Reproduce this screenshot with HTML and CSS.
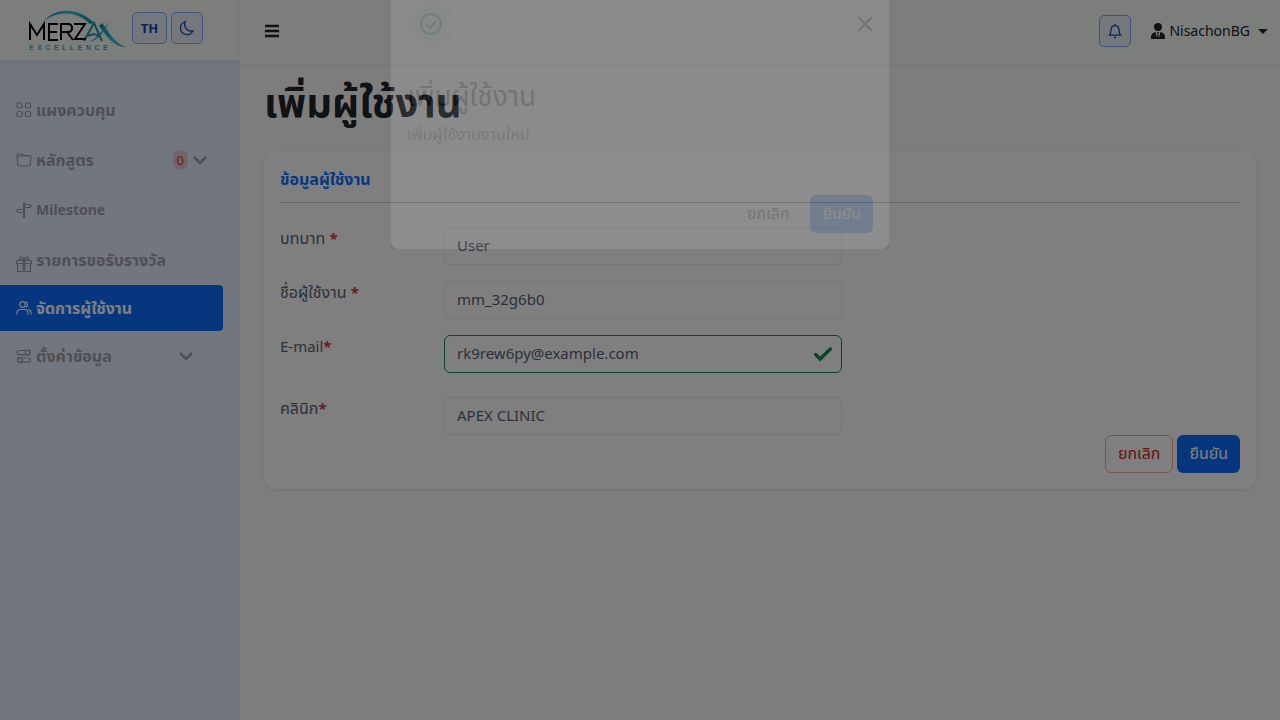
FILE: index.html
```html
<!DOCTYPE html>
<html lang="th">
<head>
<meta charset="utf-8">
<meta name="viewport" content="width=device-width, initial-scale=1">
<title>เพิ่มผู้ใช้งาน</title>
<link rel="stylesheet" href="styles.css">
</head>
<body>
<div class="app">
  <aside class="sidebar">
    <div class="brand">
      <svg class="logo" viewBox="0 0 100 42" role="img" aria-label="MERZ AX EXCELLENCE">
        <defs>
          <linearGradient id="arc" x1="0" x2="1"><stop offset="0" stop-color="#087fa8"/><stop offset=".5" stop-color="#27cde4"/><stop offset="1" stop-color="#168aa8"/></linearGradient>
        </defs>
        <path d="M16 12C27-1 50-3 66 14l-4 1C48 1 29 2 16 12z" fill="url(#arc)"/>
        <path d="M74 14c8 10 14 22 24 24-15-1-20-13-27-21z" fill="url(#arc)"/>
        <path d="M86 12C76 14 73 28 61 33c9-1 14-10 18-16 2-3 4-4 7-5z" fill="#27b6cc"/>
        <path d="M56 32 66 14l8 18M60 27c5-3 8-2 12 1" fill="none" stroke="#2296b0" stroke-width="2"/>
        <g fill="none" stroke="#000" stroke-width="2">
          <path d="M2 31V15l7 11 7-11v16M30 15h-9v16h9M21 23h8M33 31V15h7q4 0 4 4t-4 4h-7M39 23l6 8M46 15h11L47 30h11"/>
        </g>
        <text x="1" y="41" class="logo-sub">E&ensp;X&ensp;C&ensp;E&ensp;L&ensp;L&ensp;E&ensp;N&ensp;C&ensp;E</text>
      </svg>
      <button class="square lang" type="button">TH</button>
      <button class="square" type="button" aria-label="โหมดมืด">
        <svg viewBox="0 0 16 16" class="i16"><path d="M6.200 1.500C3.500 2.500 1.500 5 1.500 8a6.500 6.500 0 0 0 12.300 3C9 12 4 7.500 6.200 1.500z"/></svg>
      </button>
    </div>
    <nav class="menu">
      <a href="#"><svg viewBox="0 0 16 16" class="i16"><rect x="1" y="1" width="5" height="5" rx="1"/><rect x="9.5" y="1" width="5" height="5" rx="1"/><rect x="1" y="9.5" width="5" height="5" rx="1"/><rect x="9.5" y="9.5" width="5" height="5" rx="1"/></svg><span>แผงควบคุม</span></a>
      <a href="#"><svg viewBox="0 0 16 16" class="i16"><path d="M1.200 5.200 1 3.500Q1 2 2.500 2h3.200Q6.500 2 7.200 2.700t1.600.8h4.700Q15 3.500 15 5l-.7 7Q14 14 12.500 14h-9Q2 14 1.700 12.500zM1.200 5Q1.500 4 3 4h10.500"/></svg><span>หลักสูตร</span><span class="count">0</span><svg viewBox="0 0 16 16" class="i16 chev"><path d="m2 5 6 6 6-6"/></svg></a>
      <a href="#" class="latin"><svg viewBox="0 0 16 16" class="i16"><path d="M7.500 15.500V1.200h1v14.300zM8.500 2.500H14l1.300 1.500L14 5.500H8.500M7.500 7.500H2L.7 9 2 10.500h5.500"/></svg><span>Milestone</span></a>
      <a href="#"><svg viewBox="0 0 16 16" class="i16 gift"><path d="M.5 4.500h15v3H.5zM1.500 7.500h13v8h-13zM7.300 4.500v11M8.700 4.500v11M8 4.500C5 4.500 3 3.500 3.500 2S7 .5 8 4.500C9 .5 12 .5 12.500 2S11 4.500 8 4.500"/></svg><span>รายการขอรับรางวัล</span></a>
      <a href="#" class="active" aria-current="page"><svg viewBox="0 0 16 16" class="i16"><circle cx="6.500" cy="4.500" r="2.800"/><path d="M1 14.500v-1.500Q1 9.500 4.500 9.500h4Q12 9.500 12 13v1.500M9.500 1.800a2.800 2.800 0 0 1 0 5.400M12.300 9.500Q15 10 15 13v1.500"/></svg><span>จัดการผู้ใช้งาน</span></a>
      <a href="#"><svg viewBox="0 0 16 16" class="i16"><rect x="1" y="2.500" width="13" height="4.200" rx="2.100"/><circle cx="11.700" cy="4.600" r="2.500"/><rect x="1.500" y="10" width="13" height="4.200" rx="2.100"/><circle cx="4" cy="12.100" r="2.500"/></svg><span>ตั้งค่าข้อมูล</span><svg viewBox="0 0 16 16" class="i16 chev inset"><path d="m2 5 6 6 6-6"/></svg></a>
    </nav>
  </aside>
  <div class="page">
    <header class="topbar">
      <button class="plain" type="button" aria-label="เมนู"><svg viewBox="0 0 16 16" class="i16 bars"><path d="M1 3h14M1 8h14M1 13h14"/></svg></button>
      <div class="account">
        <button class="square" type="button" aria-label="การแจ้งเตือน"><svg viewBox="0 0 16 16" class="i16"><path d="M2.500 12.200c1-1 1.400-2.700 1.500-5.200C4.100 4.300 5.700 2.700 8 2.700s3.900 1.600 4 4.300c.1 2.500.5 4.200 1.500 5.200zM8 1v1.700M7 14.500h2"/></svg></button>
        <button class="plain user" type="button"><svg viewBox="0 0 16 16" class="i16 tie"><circle cx="8" cy="4" r="4"/><path d="M1 16v-2q0-4 4.500-5L7 15l.6-4L6.800 9h2.400l-.8 2L9 15l1.500-6Q15 10 15 14v2z"/></svg>NisachonBG<span class="caret"></span></button>
      </div>
    </header>
    <main>
      <h1>เพิ่มผู้ใช้งาน</h1>
      <form class="card">
        <h2>ข้อมูลผู้ใช้งาน</h2>
        <div class="row"><label for="role">บทบาท <b>*</b></label><input id="role" value="User"></div>
        <div class="row"><label for="name">ชื่อผู้ใช้งาน <b>*</b></label><input id="name" value="mm_32g6b0"></div>
        <div class="row mail"><label for="email" class="latin">E-mail<b>*</b></label><div class="field"><input id="email" type="email" class="valid" value="rk9rew6py@example.com"><svg viewBox="0 0 16 16" class="tick"><path d="m1.500 8.500 4 4 9-9"/></svg></div></div>
        <div class="row"><label for="clinic">คลินิก<b>*</b></label><input id="clinic" value="APEX CLINIC"></div>
        <div class="actions"><button class="btn outline" type="button">ยกเลิก</button><button class="btn primary" type="button">ยืนยัน</button></div>
      </form>
    </main>
  </div>
</div>
<div class="backdrop"></div>
<div class="modal" role="dialog" aria-labelledby="modal-title">
  <div class="modal-head">
    <span class="ring"><svg viewBox="0 0 24 24"><circle cx="12" cy="12" r="10"/><path d="m7 12 4 4 6-7"/></svg></span>
    <button class="plain close" type="button" aria-label="ปิด"><svg viewBox="0 0 16 16" class="i16"><path d="m1 1 14 14M15 1 1 15"/></svg></button>
  </div>
  <h3 id="modal-title">เพิ่มผู้ใช้งาน</h3>
  <p>เพิ่มผู้ใช้งานงานใหม่</p>
  <div class="modal-actions"><button class="btn link" type="button">ยกเลิก</button><button class="btn primary" type="button">ยืนยัน</button></div>
</div>
</body>
</html>
```
FILE: styles.css
```css
* { box-sizing: border-box; }
body { margin: 0; font: 15px/24px "Noto Sans", "Noto Sans Thai", sans-serif; color: #595e76; background: #fafafa; }
button, input { font: inherit; color: inherit; }
button { cursor: pointer; }
.app { display: flex; min-height: 100vh; }
.sidebar { width: 240px; flex: none; background: #e4ecfd; }
.brand { display: flex; align-items: center; gap: 4px; height: 60px; padding: 0 0 4px 28px; background: #f8fcf9; box-shadow: 0 2px 4px #d5dded; }
.logo { width: 100px; height: 42px; flex: none; margin-top: 4px; }
.logo-sub { font: 700 7px "Liberation Sans", sans-serif; fill: #2db1c6; }
.i16 { width: 16px; height: 16px; flex: none; fill: none; stroke: currentColor; }
.square { width: 32px; height: 32px; flex: none; display: flex; align-items: center; justify-content: center; padding: 0; border: 1px solid #75a8fb; border-radius: 5px; background: #e9f0f8; color: #0b46ae; }
.square .i16 { stroke-width: 1.3; }
.lang { width: 35px; font-weight: 700; font-size: 13px; }
.menu { padding-top: 25px; }
.menu a { display: flex; align-items: center; gap: 4px; height: 50px; padding: 0 32px 0 16px; color: #9c9fab; font-size: 16px; font-weight: 700; text-decoration: none; white-space: nowrap; }
.menu a.latin { font-size: 14px; }
.menu a.active { height: 46px; margin-right: 17px; background: #0d6efd; color: #fff; border-radius: 0 4px 4px 0; }
.menu .i16 { stroke-width: 1.2; }
.menu .gift { margin-top: 8px; }
.menu .chev { margin-left: auto; stroke-width: 2.5; }
.count { margin-left: auto; padding: 0 4px; border-radius: 10px; background: #e5c9ce; color: #d4322a; font-size: 13px; font-weight: 400; line-height: 20px; }
.menu .count + .chev { margin-left: 0; }
.inset { margin-right: 14px; }
.page { flex: 1; min-width: 0; }
.topbar { display: flex; align-items: center; justify-content: space-between; height: 64px; padding: 0 12px 2px 24px; background: #f8fcf9; box-shadow: 0 1px 3px #e6e8f2; }
.plain { display: flex; align-items: center; padding: 0; border: 0; background: none; color: #212529; }
.bars { stroke-width: 2.5; }
.account { display: flex; gap: 19px; }
.user { gap: 3px; font-size: 14px; }
.tie { fill: currentColor; stroke: none; }
.caret { margin-left: 5px; border: 5px solid transparent; border-top-color: currentColor; border-bottom: 0; }
main { padding: 6px 24px; }
h1 { margin: 0 0 18px; color: #212529; font-size: 40px; line-height: 64px; }
.card { padding: 16px; background: #fff; border-radius: 12px; box-shadow: 0 1px 3px #dfe3e8; }
h2 { margin: 0 0 24px; padding-bottom: 11px; border-bottom: 1px solid #c8c8c8; color: #0d6efd; font-size: 16px; line-height: 23px; }
.row { display: grid; grid-template-columns: 164px minmax(0, 398px); margin-bottom: 16px; }
.row label { font-size: 16px; line-height: 22px; }
.row label.latin { font-size: 15px; }
.row b { color: #dc3545; font-size: 15px; }
.row.mail { margin-bottom: 24px; }
.row:nth-last-child(2) { margin-bottom: 0; }
.row input { width: 100%; height: 38px; padding: 0 12px 2px; border: 1px solid #eaeaec; border-radius: 6px; background: transparent; }
.row input.valid { border-color: #198754; }
.field { position: relative; }
.tick { position: absolute; right: 10px; top: 10px; width: 18px; height: 18px; fill: none; stroke: #198754; stroke-width: 3; stroke-linecap: round; }
.actions, .modal-actions { display: flex; justify-content: flex-end; gap: 4px; }
.btn { height: 38px; padding: 0 12px 2px; border: 1px solid transparent; border-radius: 6px; background: none; font-size: 16px; }
.outline { border-color: #f4a6a6; color: #c62828; }
.primary { padding: 0 11px 2px; background: #0d6efd; color: #fff; }
.link { color: #212529; }
.backdrop { position: fixed; inset: 0; background: rgba(0, 0, 0, .5); }
.modal { position: fixed; top: -17px; left: 50%; width: 498px; margin-left: -249px; padding: 16px; border-radius: 8px; background: #fff; opacity: .11; }
.modal-head { display: flex; align-items: center; justify-content: space-between; height: 50px; }
.ring { display: flex; padding: 12px; border-radius: 50%; background: #e4ebe7; }
.ring svg { width: 24px; height: 24px; fill: none; stroke: #00a060; stroke-width: 2; }
.close .i16 { stroke-width: 2; }
h3 { margin: 26px 0 7px; color: #212529; font-size: 28px; font-weight: 400; line-height: 40px; }
.modal p { margin: 0 0 49px; font-size: 16px; }
.modal-actions { gap: 8px; }
```
